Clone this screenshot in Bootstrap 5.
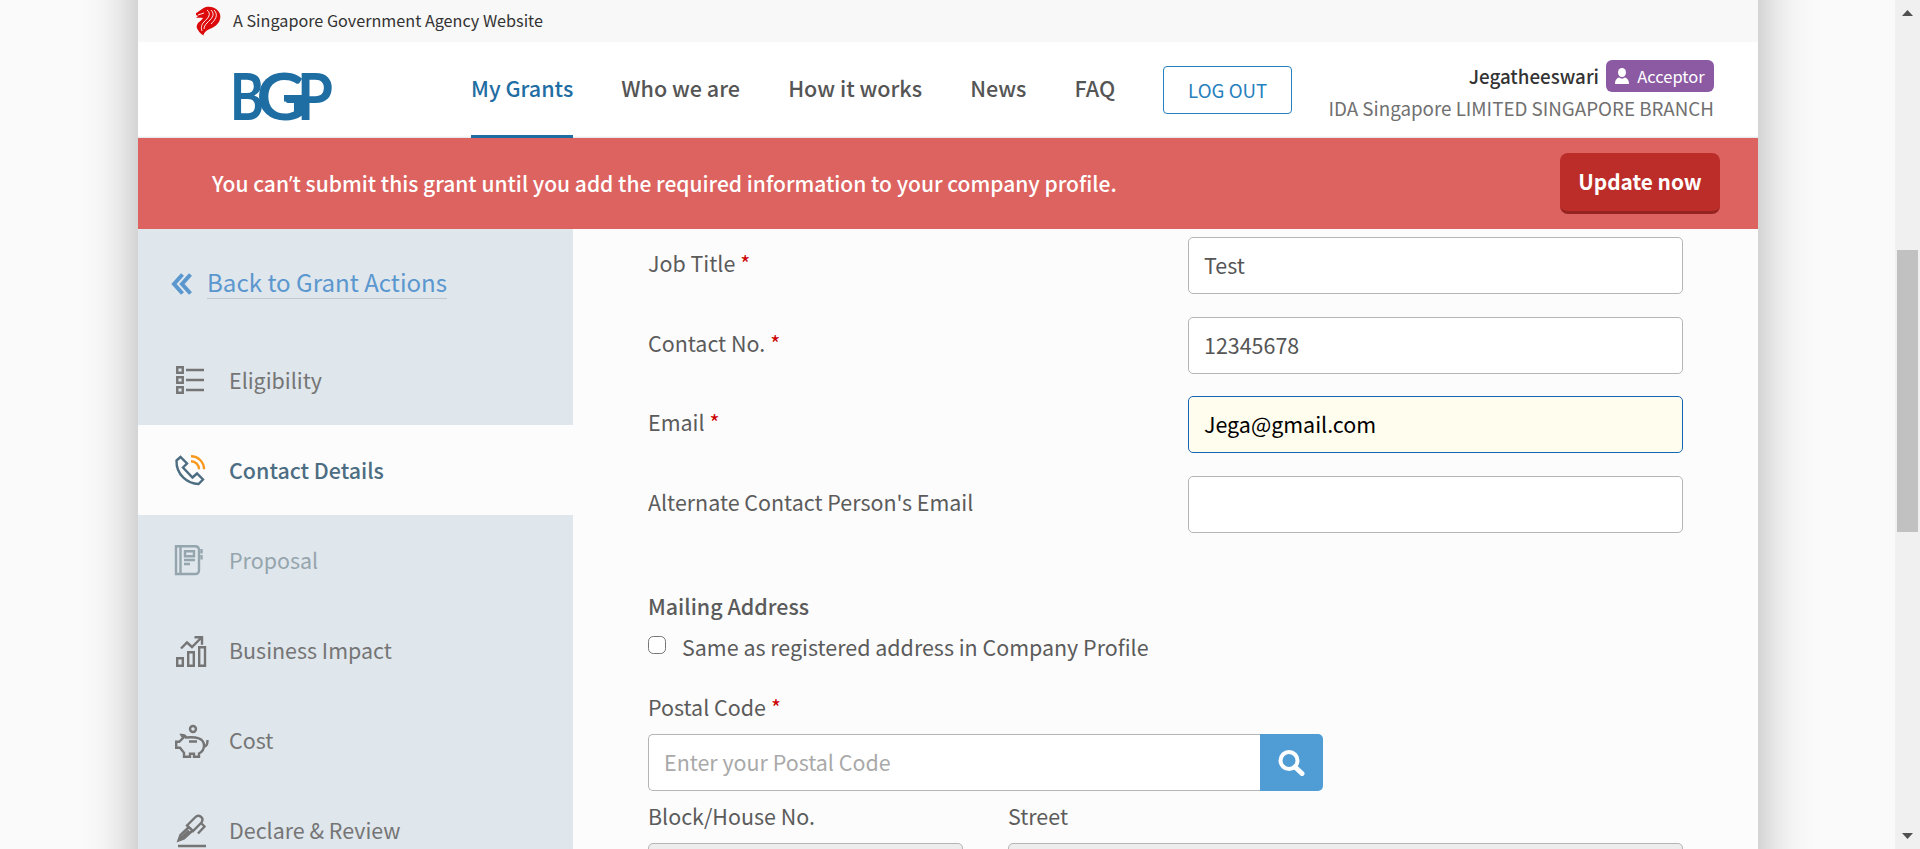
<!DOCTYPE html>
<html lang="en">
<head>
<meta charset="utf-8">
<title>Business Grants Portal</title>
<link rel="stylesheet" href="https://cdn.jsdelivr.net/npm/bootstrap@5.3.0/dist/css/bootstrap.min.css">
<style>
body{font-family:"Noto Sans CJK SC","Open Sans",sans-serif;font-size:21.45px;line-height:30px;color:#5b5b5b;background:#fafafa;height:100vh;overflow:hidden}
.stage{overflow:hidden}
.sheet{width:1620px;height:1029px;margin:-90px 0 0 138px;padding-top:90px;background:#fcfcfc;box-shadow:0 0 50px rgba(0,0,0,.3)}
.gov{height:42px;background:#f8f8f8;padding-left:57px;font-size:16.2px;color:#333}
.gov svg{margin-right:11px}
.gov span{padding-bottom:2px}
.masthead{height:96px;background:#fff;box-shadow:inset 0 -2px 2px -1px #dde3e6}
.brand{margin:18px 128px 0 84px}
.menu{gap:48.1px;margin-right:48px}
.menu a{color:#555;font-size:21.55px;font-weight:500;text-decoration:none;height:96px;padding:0;line-height:30px;padding-top:31px;white-space:nowrap}
.menu a.active{color:#1f6ea3;border-bottom:3px solid #1f6ea3}
.logout{width:129px;height:48px;margin-top:24px;border:1px solid #2680bd;border-radius:4px;color:#2680bd;font-size:18.7px;background:#fff;padding:1px 0 0}
.who{margin:18px 44px 0 0;font-size:18.8px;color:#707070}
.who b{font-weight:500;color:#333}
.company{line-height:32px}
.role{background:#8c5aa3;color:#fff;border-radius:6px;width:108px;height:32px;font-size:16.5px;margin-left:7px}
.notice{height:91px;background:#dd6360;color:#fff;padding:0 38px 0 74px;font-weight:500;font-size:21px}
.notice span{padding-bottom:2px}
.notice i{font-family:"Open Sans",sans-serif;font-style:normal;line-height:1}
.update{width:160px;height:61px;border:0;border-radius:8px;background:#bc2d29;border-bottom:3px solid #952320;color:#fff;font-weight:700;font-size:20.8px;margin-top:-1px;padding:0 0 1px}
.side{width:435px;background:#dfe6ec}
.back{height:106px;padding-left:33px;color:#5b97cf;font-size:24.1px}
.back svg{margin-top:3px}
.back span{border-bottom:1px solid #c3c8cc;line-height:32px;margin-left:15px}
.step{height:90px;padding-left:36px;color:#757575}
.step span{padding-bottom:1px}
.step svg{width:36px;height:36px;margin-right:19px;fill:none;stroke:currentColor;stroke-width:2.4;overflow:visible}
.step.now{background:#fcfcfc;color:#4d6d82;font-weight:500}
.step.off{color:#95a5ad}
.pane{padding:8px 75px 0}
.pane .row{--bs-gutter-x:45px}
.field{height:57px;margin-bottom:22.6px}
.field label{line-height:30px;padding-top:11px}
.req{color:#c00;margin-left:5px}
.pane .form-control{height:57px;border:1px solid #b5b5b5;border-radius:5px;font-size:21.45px;padding:0 15px 2px;color:#555;background:#fff}
.pane .form-control.hot{border-color:#1565b5;background:#fffdee;color:#000}
.pane .form-control::placeholder{color:#a9a9a9}
.pane .form-control:disabled{background:#ededed}
.heading{margin-top:58px;font-weight:500}
.same{margin-top:11px}
.code{margin:30px 0 12px}
.address{margin-top:10.6px}
.address label{margin-bottom:11.6px}
.tick{width:18px;height:18px;margin:-3px 16px 0 0;border:1.5px solid #767676;border-radius:3px}
.find{width:63px;background:#509dd5;border:0;border-radius:0 5px 5px 0;padding-bottom:5px}
.pane .zip{border-right:0;border-radius:5px 0 0 5px}
.rail{width:25px;background:#f0f0f0}
.thumb{width:21px;height:282px;margin-top:233px;background:#c1c1c1}
.up{margin-top:10px}
.down{margin-bottom:9px}
</style>
</head>
<body class="d-flex">
<div class="stage flex-fill">
<div class="sheet">
  <div class="gov d-flex align-items-center">
    <svg width="27" height="30" viewBox="0 0 27 30"><path d="M1 7C4 6 7 2 12 .8 18 0 23 3 25 8 26.500 14 23 19 17 22 12 24 9 26 8.500 29.500 6 28 4 26 3 24 1 22 1.500 19 3 17 5 15 7 14 8 12 6 12 4 11.500 1 12L3 10 1 9Z" fill="#dc0a0a"/><path d="M12 4c5 4 1 8-3 12-3 3-3 6-2 9M16 4c5 5 0 9-4 13-2 2-3 4-3 6M19 4c5 5 1 10-3 14M3 9l6-2" fill="none" stroke="#fff" stroke-width=".9"/></svg>
    <span>A Singapore Government Agency Website</span>
  </div>
  <header class="masthead d-flex">
    <svg class="brand flex-shrink-0" width="121" height="78" viewBox="-10 -10 121 78" overflow="visible" fill="#1f6ea3" font-family="Lato" font-weight="700" font-size="65"><text x="-2" y="49.500" textLength="34" lengthAdjust="spacingAndGlyphs">B</text><text x="24.500" y="49.500" textLength="49" lengthAdjust="spacingAndGlyphs">G</text><text x="65" y="49.500" textLength="36" lengthAdjust="spacingAndGlyphs">P</text><rect x="52" y="25" width="22" height="6.500"/></svg>
    <nav class="menu nav flex-nowrap">
      <a class="active" href="#">My Grants</a><a href="#">Who we are</a><a href="#">How it works</a><a href="#">News</a><a href="#">FAQ</a>
    </nav>
    <button class="logout btn flex-shrink-0">LOG OUT</button>
    <div class="who ms-auto text-end text-nowrap">
      <div class="d-flex justify-content-end align-items-center"><b>Jegatheeswari</b><span class="role d-inline-flex align-items-center justify-content-center"><svg width="14" height="16" viewBox="0 0 14 16" fill="#fff" class="me-2"><ellipse cx="7" cy="4.500" rx="4" ry="4.500"/><path d="M0 16c0-4 2-6 4-6.500 2 1.500 4 1.500 6 0 2 .5 4 2.500 4 6.500z"/></svg><span>Acceptor</span></span></div>
      <div class="company">IDA Singapore LIMITED SINGAPORE BRANCH</div>
    </div>
  </header>
  <div class="notice d-flex align-items-center justify-content-between">
    <span>You can<i>’</i>t submit this grant until you add the required information to your company profile.</span>
    <button class="update">Update now</button>
  </div>
  <div class="d-flex">
    <aside class="side">
      <div class="back d-flex align-items-center"><svg width="21" height="22" viewBox="0 0 21 22" fill="none" stroke="#5b97cf" stroke-width="4"><path d="M11.500 1.500 3 11l8.500 9.500M19.500 1.500 11 11l8.500 9.500"/></svg><span>Back to Grant Actions</span></div>
      <div class="step d-flex align-items-center"><svg viewBox="0 0 36 36"><path d="M3.250 5.250h5.500v5.500h-5.500zM3.250 15.250h5.500v5.500h-5.500zM3.250 25.250h5.500v5.500h-5.500zM12 8h18M12 18h18M12 28h18"/></svg><span>Eligibility</span></div>
      <div class="step now d-flex align-items-center"><svg viewBox="0 0 36 36"><path d="M2.500 8.500 6.500 5l6.500 6.500-4 4 9.500 10 4.500-4 6 6-4.500 4.500C14 32 2 23 2.500 8.500z"/><path d="M17 4.300c7 0 13 5.500 13 13M17 9.300c4.500 0 8 3.500 8 8" stroke="#f7981d"/></svg><span>Contact Details</span></div>
      <div class="step off d-flex align-items-center"><svg viewBox="0 0 36 36"><path d="M2 4.200h19q4 0 4 4v20q0 3.800-4 3.800H2zM6.500 4v28"/><path d="M11 9.200h9v5h-9zM10 18h11M10 22h6M27.500 7v4.500M27.500 13v4.500"/></svg><span>Proposal</span></div>
      <div class="step d-flex align-items-center"><svg viewBox="0 0 36 36"><path d="M3.200 26.200h5.600v7.600H3.200zM14.200 20.200h5.600v13.600h-5.600zM25.200 15.200h5.800v18.600h-5.800z"/><path d="m7 16.500 6-6 5 4.500 9.500-9.500M20.500 5.200h7.500v7.500"/></svg><span>Business Impact</span></div>
      <div class="step d-flex align-items-center"><svg viewBox="0 0 36 36"><circle cx="19" cy="7" r="3"/><path d="M7.500 13c3 0 4 1 4.500 2.500 10-1 18 .5 18 8 0 4-2 6.500-5 8v3.300h-5v-3h-4v3h-6v-4l-4-5H2.200v-6h3l4-4zM15 19.500h8M30 25c3-1.500 3.500-3 3.500-7"/></svg><span>Cost</span></div>
      <div class="step d-flex align-items-center"><svg viewBox="0 0 36 36"><path d="M13 13.500 21 5.500c4-4 9.500.5 6.500 5L19 19zM14.500 15.500 6.500 23l-2 5.500 5.500-2 8-7.500M6 27l9-8.500M27.500 11.500l3 3-6.500 7M4 34h28"/></svg><span>Declare &amp; Review</span></div>
    </aside>
    <main class="pane flex-fill">
      <div class="row field"><div class="col-6"><label>Job Title<span class="req">*</span></label></div><div class="col-6"><input class="form-control" value="Test"></div></div>
      <div class="row field"><div class="col-6"><label>Contact No.<span class="req">*</span></label></div><div class="col-6"><input class="form-control" value="12345678"></div></div>
      <div class="row field"><div class="col-6"><label>Email<span class="req">*</span></label></div><div class="col-6"><input class="form-control hot" value="Jega@gmail.com"></div></div>
      <div class="row field"><div class="col-6"><label>Alternate Contact Person's Email</label></div><div class="col-6"><input class="form-control"></div></div>
      <div class="heading">Mailing Address</div>
      <div class="same d-flex align-items-center"><input type="checkbox" class="tick form-check-input"><span>Same as registered address in Company Profile</span></div>
      <div class="code">Postal Code<span class="req">*</span></div>
      <div class="row"><div class="col-8 d-flex"><input class="form-control zip" placeholder="Enter your Postal Code"><button class="find flex-shrink-0"><svg width="27" height="26" viewBox="0 0 27 26" fill="none" stroke="#fff"><circle cx="11" cy="10.500" r="8.500" stroke-width="4"/><path d="m17 17 7 6.500" stroke-width="5" stroke-linecap="round"/></svg></button></div></div>
      <div class="row address"><div class="col-4"><label>Block/House No.</label><input class="form-control" disabled></div><div class="col-8"><label>Street</label><input class="form-control" disabled></div></div>
    </main>
  </div>
</div>
</div>
<div class="rail d-flex flex-column align-items-center">
  <svg class="up flex-shrink-0" width="11" height="7" viewBox="0 0 11 7"><path d="M5.500 0 11 6H0z" fill="#505050"/></svg>
  <div class="thumb flex-shrink-0"></div>
  <svg class="down mt-auto flex-shrink-0" width="11" height="7" viewBox="0 0 11 7"><path d="M0 0h11L5.500 6z" fill="#505050"/></svg>
</div>
<script src="https://cdn.jsdelivr.net/npm/bootstrap@5.3.0/dist/js/bootstrap.bundle.min.js"></script>
</body>
</html>
